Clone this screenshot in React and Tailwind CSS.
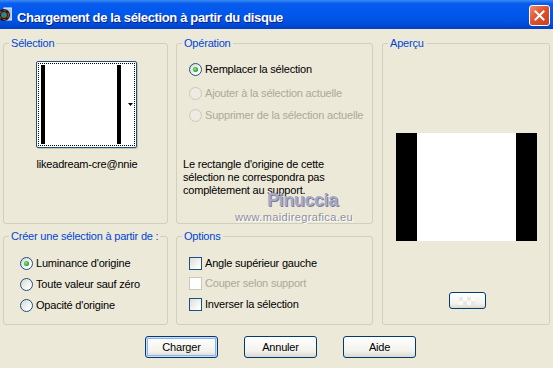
import React from "react";

const font = "font-['Liberation_Sans','Arial',sans-serif]";

function Radio({ checked, disabled }) {
  return (
    <span
      className={`w-[13px] h-[13px] rounded-full border flex items-center justify-center shrink-0 ${
        disabled
          ? "border-[#CAC8BB] bg-[#EEECE2]"
          : "border-[#1C5180] bg-[linear-gradient(135deg,#D6D6CE,#FFFFFF_80%)]"
      }`}
    >
      {checked && (
        <span className="w-[5px] h-[5px] rounded-full bg-[radial-gradient(circle_at_40%_40%,#8CE88C,#1E9E1E_70%)]" />
      )}
    </span>
  );
}

function Check({ disabled }) {
  return (
    <span
      className={`w-[13px] h-[13px] border shrink-0 ${
        disabled
          ? "border-[#CAC8BB] bg-white"
          : "border-[#1C5180] bg-[linear-gradient(135deg,#DCDCD7,#FFFFFF_85%)]"
      }`}
    />
  );
}

function Group({ label, className, children }) {
  return (
    <div
      className={`relative border border-[#D0D0BF] rounded-[3px] ${className}`}
    >
      <span className="absolute top-[-7px] left-[5px] px-[2px] bg-[#ECE9D8] text-[#0046D5] leading-[13px]">
        {label}
      </span>
      {children}
    </div>
  );
}

function Row({ control, label, disabled, className }) {
  return (
    <div className={`flex items-center h-[13px] leading-[13px] ${className}`}>
      {control}
      <span
        className={`ml-[3px] whitespace-nowrap ${
          disabled ? "text-[#ACA899]" : "text-black"
        }`}
      >
        {label}
      </span>
    </div>
  );
}

function XPButton({ children, isDefault }) {
  return (
    <button
      className={`w-[73px] h-[22px] rounded-[3px] border border-[#003C74] bg-[linear-gradient(to_bottom,#FFFFFF,#F3F2EC_70%,#DCD8CC)] text-black text-[11px] leading-[13px] tracking-[-0.2px] ${
        isDefault
          ? "shadow-[inset_0_0_0_1px_#CDE0FB,inset_0_0_0_2px_#8FB2EE]"
          : ""
      }`}
    >
      {children}
    </button>
  );
}

export default function App() {
  return (
    <div
      className={`relative w-[553px] h-[368px] bg-[#ECE9D8] overflow-hidden text-[11px] tracking-[-0.2px] ${font}`}
    >
      {/* Title bar */}
      <div className="h-[29px] flex items-start bg-[linear-gradient(to_bottom,#3A8CF5_0%,#0A5CEB_12%,#0058EE_40%,#0054E3_70%,#0047D2_90%,#003FC4_100%)]">
        <svg width="14" height="16" viewBox="0 0 14 16" className="mt-[7px] -ml-[2px] shrink-0">
          <rect x="6" y="1" width="8" height="12" fill="#A9C8F0" stroke="#E8F1FC" strokeWidth="1" />
          <circle cx="6" cy="8" r="6" fill="#1A1A1A" />
          <circle cx="6" cy="8" r="4.5" fill="none" stroke="#C03030" strokeWidth="1.2" strokeDasharray="3 2" />
          <circle cx="6" cy="8" r="3" fill="#2E8B57" />
          <circle cx="6" cy="8" r="1.5" fill="#3A6FD8" />
        </svg>
        <span className="ml-[5px] mt-[10px] text-white font-bold text-[13px] leading-[15px] tracking-[-0.35px] whitespace-nowrap [text-shadow:1px_1px_#0A1E8C]">
          Chargement de la sélection à partir du disque
        </span>
        <div className="ml-auto mr-[3px] mt-[5px] w-[21px] h-[21px] rounded-[3px] border border-white bg-[linear-gradient(135deg,#F08A6A,#E0532F_45%,#C5401E)] flex items-center justify-center">
          <svg width="11" height="11" viewBox="0 0 11 11">
            <path d="M1.5 1.5 L9.5 9.5 M9.5 1.5 L1.5 9.5" stroke="white" strokeWidth="2" strokeLinecap="square" />
          </svg>
        </div>
      </div>

      {/* Body */}
      <div className="flex pt-[14px] pl-[3px]">
        <div className="grid grid-cols-[165px_197px] grid-rows-[181px_89px] gap-x-[8px] gap-y-[12px]">
          <Group label="Sélection" className="flex flex-col items-center">
            <div className="mt-[17px] ml-[2px] w-[101px] h-[87px] border border-[#1C5180] rounded-[2px] bg-white p-[1px] shadow-[1px_1px_0_#C8C5B6]">
              <div className="h-full border border-dotted border-black flex pl-[2px] py-[1px]">
                <div className="w-[4px] bg-black" />
                <div className="w-[72px]" />
                <div className="w-[4px] bg-black" />
                <div className="flex-1 flex items-center justify-end pr-[1px]">
                  <svg width="5" height="3" viewBox="0 0 5 3">
                    <path d="M0 0 H5 L2.5 3 Z" fill="black" />
                  </svg>
                </div>
              </div>
            </div>
            <div className="mt-[10px] ml-[3px] leading-[13px] text-black whitespace-nowrap">
              likeadream-cre@nnie
            </div>
          </Group>

          <Group label="Opération" className="pl-[12px]">
            <Row className="mt-[19px]" control={<Radio checked />} label="Remplacer la sélection" />
            <Row className="mt-[11px]" control={<Radio disabled />} label="Ajouter à la sélection actuelle" disabled />
            <Row className="mt-[9px]" control={<Radio disabled />} label="Supprimer de la sélection actuelle" disabled />
            <p className="mt-[36px] -ml-[6px] leading-[13px] text-black w-[170px]">
              Le rectangle d'origine de cette sélection ne correspondra pas complètement au support.
            </p>
          </Group>

          <Group label="Créer une sélection à partir de :" className="pl-[16px]">
            <Row className="mt-[20px]" control={<Radio checked />} label="Luminance d'origine" />
            <Row className="mt-[8px]" control={<Radio />} label="Toute valeur sauf zéro" />
            <Row className="mt-[8px]" control={<Radio />} label="Opacité d'origine" />
          </Group>

          <Group label="Options" className="pl-[12px]">
            <Row className="mt-[20px]" control={<Check />} label="Angle supérieur gauche" />
            <Row className="mt-[7px]" control={<Check disabled />} label="Couper selon support" disabled />
            <Row className="mt-[8px]" control={<Check />} label="Inverser la sélection" />
          </Group>
        </div>

        <Group label="Aperçu" className="ml-[9px] w-[168px] h-[282px] flex flex-col items-center">
          <div className="mt-[89px] ml-[1px] w-[141px] h-[108px] flex">
            <div className="w-[21px] bg-black" />
            <div className="flex-1 bg-white" />
            <div className="w-[21px] bg-black" />
          </div>
          <div className="mt-[51px] ml-[2px] w-[37px] h-[17px] rounded-[3px] border border-[#003C74] bg-[linear-gradient(to_bottom,#FFFFFF,#F3F2EC_70%,#DCD8CC)] flex items-center justify-center">
            <div className="grid grid-cols-4 grid-rows-2 w-[16px] h-[8px] opacity-70">
              <div className="bg-[#E4E4E4]" />
              <div className="bg-white" />
              <div className="bg-[#E4E4E4]" />
              <div className="bg-white" />
              <div className="bg-white" />
              <div className="bg-[#E4E4E4]" />
              <div className="bg-white" />
              <div className="bg-[#E4E4E4]" />
            </div>
          </div>
        </Group>
      </div>

      {/* Buttons */}
      <div className="flex gap-[26px] pl-[145px] mt-[11px]">
        <XPButton isDefault>Charger</XPButton>
        <XPButton>Annuler</XPButton>
        <XPButton>Aide</XPButton>
      </div>

      {/* Watermark */}
      <div className="absolute left-[267px] top-[191px] text-[18px] leading-none font-bold tracking-[-0.4px] text-[#A9A9C6] [text-shadow:1px_1px_0_#7E7E98]">
        Pinuccia
      </div>
      <div className="absolute left-[235px] top-[212px] text-[11px] leading-none tracking-[0.35px] text-[#8E8E9E] [text-shadow:1px_1px_0_#FFFFFF]">
        www.maidiregrafica.eu
      </div>
    </div>
  );
}
